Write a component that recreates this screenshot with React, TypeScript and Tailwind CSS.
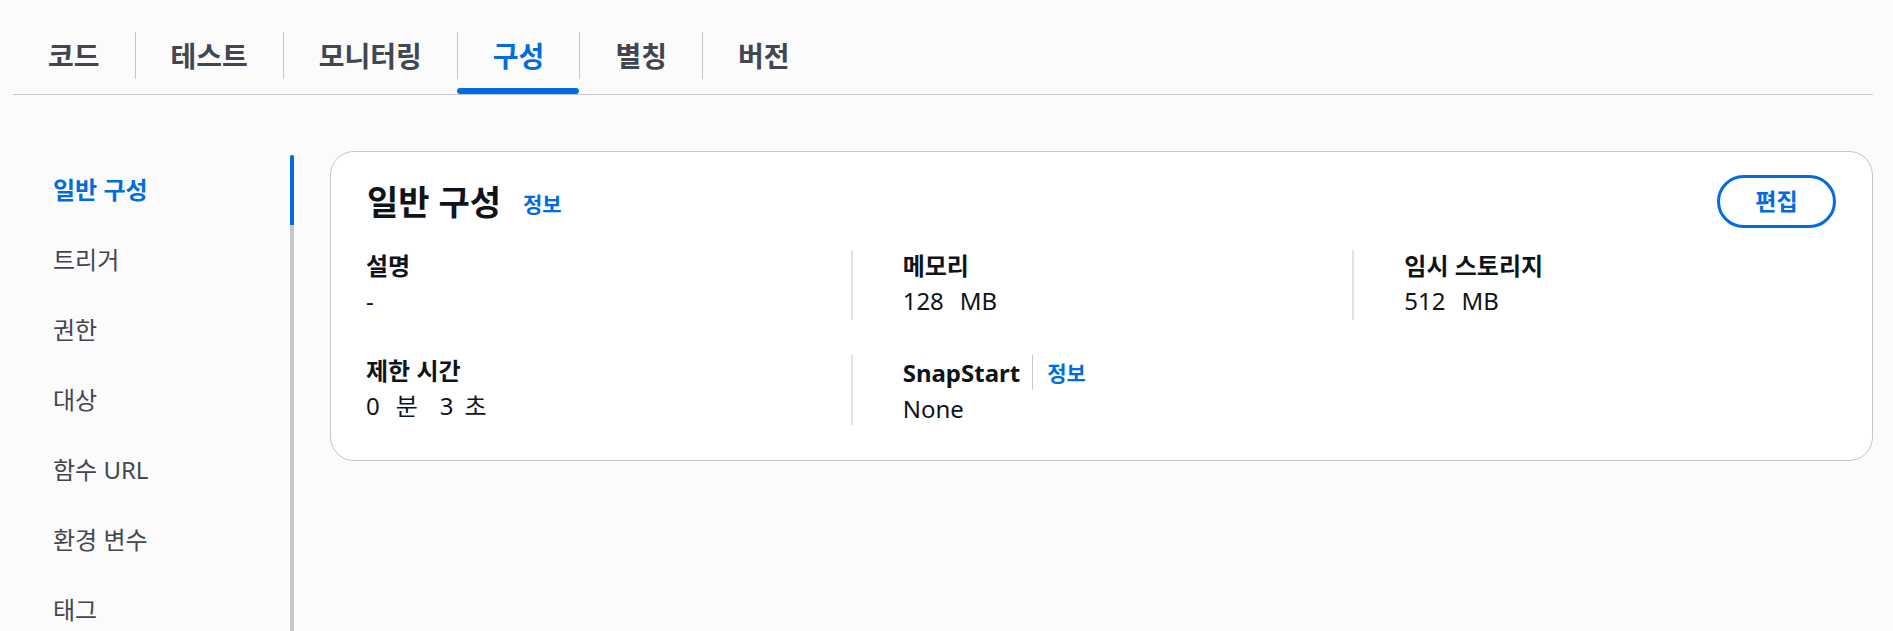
import React from 'react'

const tabs = ['코드', '테스트', '모니터링', '구성', '별칭', '버전']
const activeTab = '구성'

const navItems = ['일반 구성', '트리거', '권한', '대상', '함수 URL', '환경 변수', '태그']

function Tabs() {
  return (
    <div className="flex pt-[32px] border-b border-[#c6c6cd]">
      {tabs.map((t, i) => {
        const active = t === activeTab
        return (
          <div key={t} className="flex flex-col">
            <div
              className={`h-[47px] flex items-center px-[35px] text-[28px] font-bold ${
                i > 0 ? 'border-l border-[#c6c6cd]' : ''
              } ${active ? 'text-[#006ce0]' : 'text-[#424650]'}`}
            >
              {t}
            </div>
            <div className="h-[15px] flex items-end">
              {active && <div className="h-[6px] w-full rounded-[4px] bg-[#006ce0]" />}
            </div>
          </div>
        )
      })}
    </div>
  )
}

function SideNav() {
  return (
    <div className="flex w-[281px] shrink-0 pt-[4px]">
      <ul className="flex-1 pl-[40px]">
        {navItems.map((item, i) => (
          <li
            key={item}
            className={`h-[70px] flex items-center text-[24px] ${
              i === 0 ? 'font-bold text-[#006ce0]' : 'text-[#424650]'
            }`}
          >
            {item}
          </li>
        ))}
      </ul>
      <div className="w-[4px] bg-[#c6c6cd] rounded-t-[4px]">
        <div className="h-[70px] bg-[#006ce0] rounded-t-[4px]" />
      </div>
    </div>
  )
}

function InfoLink() {
  return <span className="text-[21px] font-bold text-[#006ce0]">정보</span>
}

function Field({ label, children, first }: { label: React.ReactNode; children: React.ReactNode; first?: boolean }) {
  return (
    <div className={`h-[70px] ${first ? 'pl-[17px]' : 'border-l-2 border-[#e1e1e6] pl-[50px]'}`}>
      <div className="leading-[32px] text-[24px] font-bold text-[#0f141a]">{label}</div>
      <div className="leading-[32px] mt-[3px] text-[24px] text-[#0f141a]">{children}</div>
    </div>
  )
}

function GeneralConfig() {
  return (
    <div className="flex-1 bg-white border border-[#c6c6cd] rounded-[24px] px-[18px] pt-[23px] pb-[35px]">
      <div className="flex items-center justify-between px-[18px]">
        <div className="flex items-center">
          <h2 className="text-[34px] font-bold text-[#0f141a] leading-[44px]">일반 구성</h2>
          <span className="ml-[22px] mt-[6px]">
            <InfoLink />
          </span>
        </div>
        <button className="h-[53px] w-[119px] rounded-full border-[3px] border-[#006ce0] text-[23px] font-bold text-[#006ce0]">
          편집
        </button>
      </div>
      <div className="grid grid-cols-3 mt-[22px] gap-y-[35px]">
        <Field label="설명" first>
          -
        </Field>
        <Field label="메모리">
          128<span className="ml-[16px]">MB</span>
        </Field>
        <Field label="임시 스토리지">
          512<span className="ml-[16px]">MB</span>
        </Field>
        <Field label="제한 시간" first>
          0<span className="ml-[16px]">분</span>
          <span className="ml-[22px]">3</span>
          <span className="ml-[11px]">초</span>
        </Field>
        <Field
          label={
            <span className="flex items-center">
              SnapStart
              <span className="ml-[12px] pl-[14px] border-l border-[#c6c6cd] h-[35px] flex items-center">
                <InfoLink />
              </span>
            </span>
          }
        >
          None
        </Field>
        <div />
      </div>
    </div>
  )
}

export default function App() {
  return (
    <div
      className="h-[631px] overflow-hidden bg-[#fbfbfb] pl-[13px] pr-[20px]"
      style={{ fontFamily: '"Noto Sans", "Noto Sans CJK KR", sans-serif' }}
    >
      <Tabs />
      <div className="flex items-start pt-[56px]">
        <SideNav />
        <div className="flex-1 ml-[36px] flex items-start">
          <GeneralConfig />
        </div>
      </div>
    </div>
  )
}
